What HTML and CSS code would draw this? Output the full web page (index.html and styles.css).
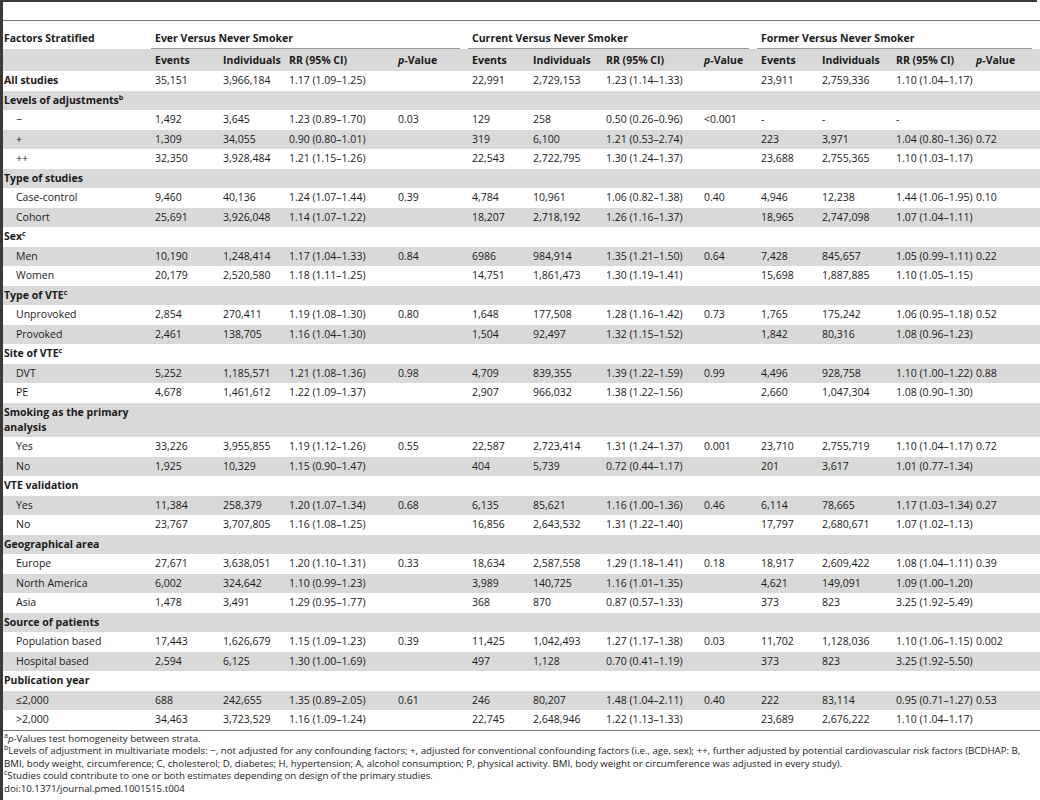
FILE: index.html
```html
<!DOCTYPE html>
<html lang="en">
<head>
<meta charset="utf-8">
<title>Table 4</title>
<link rel="stylesheet" href="styles.css">
</head>
<body>
<div class="page">
<table class="tbl">
<colgroup>
<col class="w-f"><col class="w-e1"><col class="w-i1"><col class="w-r1"><col class="w-p1">
<col class="w-e2"><col class="w-i2"><col class="w-r2"><col class="w-p2">
<col class="w-e3"><col class="w-i3"><col class="w-r3"><col class="w-p3">
</colgroup>
<thead>
<tr class="h1">
<th class="first">Factors Stratified</th>
<th colspan="4" class="grp">Ever Versus Never Smoker</th>
<th colspan="4" class="grp">Current Versus Never Smoker</th>
<th colspan="4" class="grp">Former Versus Never Smoker</th>
</tr>
<tr class="h2">
<th class="first"></th>
<th>Events</th><th>Individuals</th><th>RR (95% CI)</th><th><i>p</i>-Value</th>
<th>Events</th><th>Individuals</th><th>RR (95% CI)</th><th><i>p</i>-Value</th>
<th>Events</th><th>Individuals</th><th>RR (95% CI)</th><th><i>p</i>-Value</th>
</tr>
</thead>
<tbody>
<tr><td class="cat">All studies</td><td>35,151</td><td>3,966,184</td><td>1.17 (1.09–1.25)</td><td></td><td>22,991</td><td>2,729,153</td><td>1.23 (1.14–1.33)</td><td></td><td>23,911</td><td>2,759,336</td><td>1.10 (1.04–1.17)</td><td></td></tr>
<tr><td class="cat" colspan="13">Levels of adjustments<sup>b</sup></td></tr>
<tr><td class="sub">−</td><td>1,492</td><td>3,645</td><td>1.23 (0.89–1.70)</td><td>0.03</td><td>129</td><td>258</td><td>0.50 (0.26–0.96)</td><td>&lt;0.001</td><td>-</td><td>-</td><td>-</td><td></td></tr>
<tr><td class="sub">+</td><td>1,309</td><td>34,055</td><td>0.90 (0.80–1.01)</td><td></td><td>319</td><td>6,100</td><td>1.21 (0.53–2.74)</td><td></td><td>223</td><td>3,971</td><td>1.04 (0.80–1.36)</td><td>0.72</td></tr>
<tr><td class="sub">++</td><td>32,350</td><td>3,928,484</td><td>1.21 (1.15–1.26)</td><td></td><td>22,543</td><td>2,722,795</td><td>1.30 (1.24–1.37)</td><td></td><td>23,688</td><td>2,755,365</td><td>1.10 (1.03–1.17)</td><td></td></tr>
<tr><td class="cat" colspan="13">Type of studies</td></tr>
<tr><td class="sub">Case-control</td><td>9,460</td><td>40,136</td><td>1.24 (1.07–1.44)</td><td>0.39</td><td>4,784</td><td>10,961</td><td>1.06 (0.82–1.38)</td><td>0.40</td><td>4,946</td><td>12,238</td><td>1.44 (1.06–1.95)</td><td>0.10</td></tr>
<tr><td class="sub">Cohort</td><td>25,691</td><td>3,926,048</td><td>1.14 (1.07–1.22)</td><td></td><td>18,207</td><td>2,718,192</td><td>1.26 (1.16–1.37)</td><td></td><td>18,965</td><td>2,747,098</td><td>1.07 (1.04–1.11)</td><td></td></tr>
<tr><td class="cat" colspan="13">Sex<sup>c</sup></td></tr>
<tr><td class="sub">Men</td><td>10,190</td><td>1,248,414</td><td>1.17 (1.04–1.33)</td><td>0.84</td><td>6986</td><td>984,914</td><td>1.35 (1.21–1.50)</td><td>0.64</td><td>7,428</td><td>845,657</td><td>1.05 (0.99–1.11)</td><td>0.22</td></tr>
<tr><td class="sub">Women</td><td>20,179</td><td>2,520,580</td><td>1.18 (1.11–1.25)</td><td></td><td>14,751</td><td>1,861,473</td><td>1.30 (1.19–1.41)</td><td></td><td>15,698</td><td>1,887,885</td><td>1.10 (1.05–1.15)</td><td></td></tr>
<tr><td class="cat" colspan="13">Type of VTE<sup>c</sup></td></tr>
<tr><td class="sub">Unprovoked</td><td>2,854</td><td>270,411</td><td>1.19 (1.08–1.30)</td><td>0.80</td><td>1,648</td><td>177,508</td><td>1.28 (1.16–1.42)</td><td>0.73</td><td>1,765</td><td>175,242</td><td>1.06 (0.95–1.18)</td><td>0.52</td></tr>
<tr><td class="sub">Provoked</td><td>2,461</td><td>138,705</td><td>1.16 (1.04–1.30)</td><td></td><td>1,504</td><td>92,497</td><td>1.32 (1.15–1.52)</td><td></td><td>1,842</td><td>80,316</td><td>1.08 (0.96–1.23)</td><td></td></tr>
<tr><td class="cat" colspan="13">Site of VTE<sup>c</sup></td></tr>
<tr><td class="sub">DVT</td><td>5,252</td><td>1,185,571</td><td>1.21 (1.08–1.36)</td><td>0.98</td><td>4,709</td><td>839,355</td><td>1.39 (1.22–1.59)</td><td>0.99</td><td>4,496</td><td>928,758</td><td>1.10 (1.00–1.22)</td><td>0.88</td></tr>
<tr><td class="sub">PE</td><td>4,678</td><td>1,461,612</td><td>1.22 (1.09–1.37)</td><td></td><td>2,907</td><td>966,032</td><td>1.38 (1.22–1.56)</td><td></td><td>2,660</td><td>1,047,304</td><td>1.08 (0.90–1.30)</td><td></td></tr>
<tr><td class="cat">Smoking as the primary analysis</td><td colspan="12"></td></tr>
<tr><td class="sub">Yes</td><td>33,226</td><td>3,955,855</td><td>1.19 (1.12–1.26)</td><td>0.55</td><td>22,587</td><td>2,723,414</td><td>1.31 (1.24–1.37)</td><td>0.001</td><td>23,710</td><td>2,755,719</td><td>1.10 (1.04–1.17)</td><td>0.72</td></tr>
<tr><td class="sub">No</td><td>1,925</td><td>10,329</td><td>1.15 (0.90–1.47)</td><td></td><td>404</td><td>5,739</td><td>0.72 (0.44–1.17)</td><td></td><td>201</td><td>3,617</td><td>1.01 (0.77–1.34)</td><td></td></tr>
<tr><td class="cat" colspan="13">VTE validation</td></tr>
<tr><td class="sub">Yes</td><td>11,384</td><td>258,379</td><td>1.20 (1.07–1.34)</td><td>0.68</td><td>6,135</td><td>85,621</td><td>1.16 (1.00–1.36)</td><td>0.46</td><td>6,114</td><td>78,665</td><td>1.17 (1.03–1.34)</td><td>0.27</td></tr>
<tr><td class="sub">No</td><td>23,767</td><td>3,707,805</td><td>1.16 (1.08–1.25)</td><td></td><td>16,856</td><td>2,643,532</td><td>1.31 (1.22–1.40)</td><td></td><td>17,797</td><td>2,680,671</td><td>1.07 (1.02–1.13)</td><td></td></tr>
<tr><td class="cat" colspan="13">Geographical area</td></tr>
<tr><td class="sub">Europe</td><td>27,671</td><td>3,638,051</td><td>1.20 (1.10–1.31)</td><td>0.33</td><td>18,634</td><td>2,587,558</td><td>1.29 (1.18–1.41)</td><td>0.18</td><td>18,917</td><td>2,609,422</td><td>1.08 (1.04–1.11)</td><td>0.39</td></tr>
<tr><td class="sub">North America</td><td>6,002</td><td>324,642</td><td>1.10 (0.99–1.23)</td><td></td><td>3,989</td><td>140,725</td><td>1.16 (1.01–1.35)</td><td></td><td>4,621</td><td>149,091</td><td>1.09 (1.00–1.20)</td><td></td></tr>
<tr><td class="sub">Asia</td><td>1,478</td><td>3,491</td><td>1.29 (0.95–1.77)</td><td></td><td>368</td><td>870</td><td>0.87 (0.57–1.33)</td><td></td><td>373</td><td>823</td><td>3.25 (1.92–5.49)</td><td></td></tr>
<tr><td class="cat" colspan="13">Source of patients</td></tr>
<tr><td class="sub">Population based</td><td>17,443</td><td>1,626,679</td><td>1.15 (1.09–1.23)</td><td>0.39</td><td>11,425</td><td>1,042,493</td><td>1.27 (1.17–1.38)</td><td>0.03</td><td>11,702</td><td>1,128,036</td><td>1.10 (1.06–1.15)</td><td>0.002</td></tr>
<tr><td class="sub">Hospital based</td><td>2,594</td><td>6,125</td><td>1.30 (1.00–1.69)</td><td></td><td>497</td><td>1,128</td><td>0.70 (0.41–1.19)</td><td></td><td>373</td><td>823</td><td>3.25 (1.92–5.50)</td><td></td></tr>
<tr><td class="cat" colspan="13">Publication year</td></tr>
<tr><td class="sub">≤2,000</td><td>688</td><td>242,655</td><td>1.35 (0.89–2.05)</td><td>0.61</td><td>246</td><td>80,207</td><td>1.48 (1.04–2.11)</td><td>0.40</td><td>222</td><td>83,114</td><td>0.95 (0.71–1.27)</td><td>0.53</td></tr>
<tr><td class="sub">&gt;2,000</td><td>34,463</td><td>3,723,529</td><td>1.16 (1.09–1.24)</td><td></td><td>22,745</td><td>2,648,946</td><td>1.22 (1.13–1.33)</td><td></td><td>23,689</td><td>2,676,222</td><td>1.10 (1.04–1.17)</td><td></td></tr>
</tbody>
</table>
<div class="notes">
<p><sup>a</sup><i>p</i>-Values test homogeneity between strata.</p>
<p><sup>b</sup>Levels of adjustment in multivariate models: −, not adjusted for any confounding factors; +, adjusted for conventional confounding factors (i.e., age, sex); ++, further adjusted by potential cardiovascular risk factors (BCDHAP: B,<br>BMI, body weight, circumference; C, cholesterol; D, diabetes; H, hypertension; A, alcohol consumption; P, physical activity. BMI, body weight or circumference was adjusted in every study).</p>
<p><sup>c</sup>Studies could contribute to one or both estimates depending on design of the primary studies.</p>
<p>doi:10.1371/journal.pmed.1001515.t004</p>
</div>
</div>
</body>
</html>
```

FILE: styles.css
```css
html, body {
  margin: 0;
  padding: 0;
  background: #fff;
  overflow: hidden;
}
body {
  font-family: "Open Sans", "Noto Sans", "Liberation Sans", sans-serif;
  font-size: 10.5px;
  color: #1a1a1a;
}
.page {
  width: 1037px;
  height: 800px;
  border-top: 2px solid #3a3a3a;
  border-left: 3px solid #3a3a3a;
  padding-top: 18px;
  box-sizing: border-box;
}
.tbl {
  width: 1037px;
  table-layout: fixed;
  border-collapse: collapse;
  border-top: 1px solid #777;
  border-bottom: 1px solid #777;
}
.w-f { width: 148px; }
.w-e1 { width: 68px; }
.w-i1 { width: 66px; }
.w-r1 { width: 109px; }
.w-p1 { width: 74px; }
.w-e2 { width: 61px; }
.w-i2 { width: 73px; }
.w-r2 { width: 98px; }
.w-p2 { width: 57px; }
.w-e3 { width: 61px; }
.w-i3 { width: 74px; }
.w-r3 { width: 80px; }
.w-p3 { width: 68px; }

.tbl th, .tbl td {
  text-align: left;
  vertical-align: middle;
  padding: 2.25px 4px;
  line-height: 15px;
  white-space: nowrap;
}
.tbl th { font-weight: 700; }
.tbl th.first { padding-left: 1px; }
.h1 th {
  padding-top: 10px;
  padding-bottom: 2.5px;
}
.h1 th.grp {
  background-image: linear-gradient(#999, #999);
  background-size: calc(100% - 8px) 1px;
  background-position: left bottom;
  background-repeat: no-repeat;
}
.h2 th {
  background: #d9d9d9;
  padding-top: 4px;
  padding-bottom: 3.5px;
}
.tbl td.cat {
  font-weight: 700;
  padding-left: 1px;
  white-space: normal;
}
.tbl td.sub { padding-left: 13px; }
.tbl tbody tr:nth-child(even) td { background: #d9d9d9; }
sup {
  font-size: 7px;
  line-height: 0;
  vertical-align: 4px;
}
.notes {
  padding-top: 2px;
  padding-left: 1px;
  white-space: nowrap;
}
.notes p {
  margin: 0;
  line-height: 12.5px;
  font-size: 9.7px;
}
```
